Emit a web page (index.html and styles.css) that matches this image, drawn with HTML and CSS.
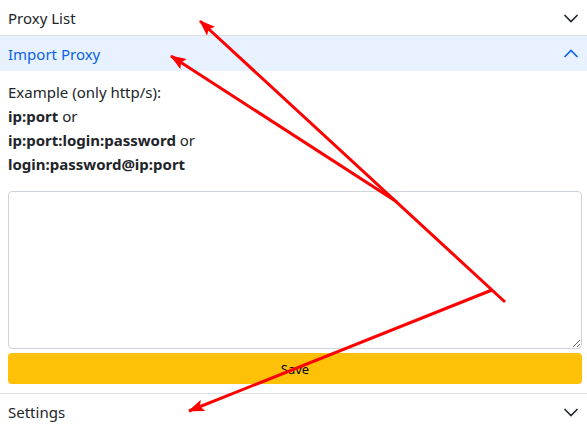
FILE: index.html
```html
<!doctype html>
<html lang="en">
  <head>
    <meta charset="utf-8">
    <title>Proxy</title>
    <link rel="stylesheet" href="styles.css">
  </head>
  <body>
    <div class="accordion">
      <div class="item">
        <button class="header">
          <span>Proxy List</span>
          <svg class="chevron" viewBox="0 0 16 16"><path d="M1.5 5 L8 11.5 L14.5 5"/></svg>
        </button>
      </div>

      <div class="item">
        <button class="header open">
          <span>Import Proxy</span>
          <svg class="chevron" viewBox="0 0 16 16"><path d="M1.5 11 L8 4.5 L14.5 11"/></svg>
        </button>
        <div class="body">
          <p class="help">
            Example (only http/s):<br>
            <b>ip:port</b> or<br>
            <b>ip:port:login:password</b> or<br>
            <b>login:password@ip:port</b>
          </p>
          <textarea class="proxies"></textarea>
          <button class="save">Save</button>
        </div>
      </div>

      <div class="item">
        <button class="header">
          <span>Settings</span>
          <svg class="chevron" viewBox="0 0 16 16"><path d="M1.5 5 L8 11.5 L14.5 5"/></svg>
        </button>
      </div>
    </div>

    <svg class="marks" viewBox="0 0 587 430">
      <defs>
        <marker id="head" markerUnits="userSpaceOnUse" markerWidth="16" markerHeight="12"
                viewBox="0 0 16 12" refX="15" refY="6" orient="auto">
          <path d="M0 0 L16 6 L0 12 L3 6 z" fill="#ff0000"/>
        </marker>
      </defs>
      <line x1="505" y1="302" x2="200" y2="21" marker-end="url(#head)"/>
      <line x1="397" y1="202" x2="171" y2="56" marker-end="url(#head)"/>
      <line x1="492" y1="290" x2="189" y2="411" marker-end="url(#head)"/>
    </svg>
  </body>
</html>
```

FILE: styles.css
```css
* {
  box-sizing: border-box;
}
body {
  margin: 0;
  font-family: "Noto Sans", "Open Sans", sans-serif;
  font-size: 15px;
  color: #212529;
  background: #fff;
}
.accordion {
  display: flex;
  flex-direction: column;
}
.item + .item {
  border-top: 1px solid #dcdde0;
}
.header {
  display: flex;
  align-items: center;
  justify-content: space-between;
  width: 100%;
  height: 35px;
  padding: 0 8px;
  border: 0;
  background: #fff;
  color: #212529;
  font: inherit;
  text-align: left;
}
.header.open {
  background: #e7f1ff;
  color: #0c63e4;
}
.chevron {
  width: 16px;
  height: 16px;
  fill: none;
  stroke: currentColor;
  stroke-width: 1.6;
}
.body {
  display: flex;
  flex-direction: column;
  padding: 9px 5px 9px 8px;
}
.help {
  margin: 0 0 15px;
  line-height: 24px;
}
.proxies {
  height: 158px;
  border: 1px solid #ced4da;
  border-radius: 4px;
  resize: vertical;
  font: inherit;
}
.save {
  margin-top: 4px;
  height: 31px;
  border: 0;
  border-radius: 4px;
  background: #ffc107;
  color: #000;
  font: inherit;
  font-size: 13px;
}
.marks {
  position: absolute;
  top: 0;
  left: 0;
  width: 587px;
  height: 430px;
  pointer-events: none;
}
.marks line {
  stroke: #ff0000;
  stroke-width: 3;
}
```
